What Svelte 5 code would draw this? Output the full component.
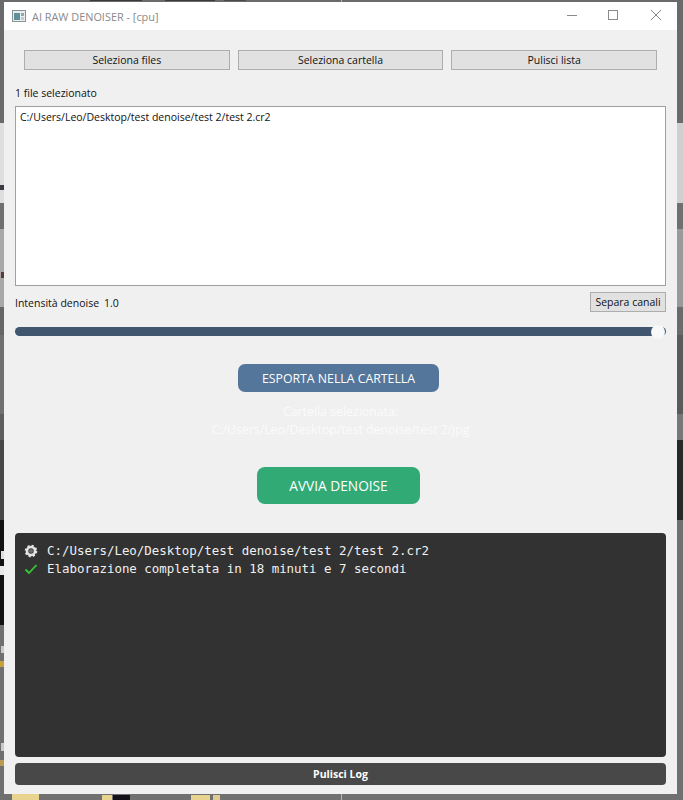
<script lang="ts">
  let files = ["C:/Users/Leo/Desktop/test denoise/test 2/test 2.cr2"];
  let topButtons = ["Seleziona files", "Seleziona cartella", "Pulisci lista"];
  let intensity = 1.0;

  // bits of the desktop that show round the window: [left, top, width, height, colour]
  let peeks = [
    [90, 0, 52, 1, "#3a3a3a"],
    [165, 0, 50, 1, "#3a3a3a"],
    [224, 0, 22, 1, "#4a4a4a"],
    [0, 185, 4, 5, "#3c3c44"],
    [1, 272, 3, 6, "#5a3c30"],
    [1, 551, 3, 8, "#dddddd"],
    [0, 566, 4, 9, "#e8e8e8"],
    [1, 646, 3, 7, "#c9c9c9"],
    [0, 661, 4, 6, "#c9a040"],
    [1, 743, 3, 8, "#c9c9c9"],
    [0, 760, 4, 6, "#b89a50"],
    [12, 794, 27, 6, "#e8d38f"],
    [102, 795, 10, 5, "#e8d38f"],
    [113, 795, 17, 5, "#14101a"],
    [191, 795, 19, 5, "#e8d38f"],
    [213, 795, 7, 5, "#e0cb90"],
  ];
</script>

<div class="desktop">
  {#each peeks as [left, top, width, height, colour]}
    <div
      class="peek"
      style="left: {left}px; top: {top}px; width: {width}px; height: {height}px; background: {colour}"
    ></div>
  {/each}

  <div class="window">
    <header class="titlebar">
      <svg class="app-icon" width="14" height="12" viewBox="0 0 14 12" aria-hidden="true">
        <rect x="0.5" y="0.5" width="13" height="11" fill="#e8eef0" stroke="#8b9296" />
        <rect x="2" y="3" width="6" height="7" fill="#5f8f97" />
        <rect x="9" y="3" width="3" height="3" fill="#9aa5aa" />
        <rect x="9" y="7" width="3" height="3" fill="#c3cacd" />
      </svg>
      <span class="title">AI RAW DENOISER - [cpu]</span>
      <div class="controls">
        <svg width="42" height="28" viewBox="0 0 42 28" aria-hidden="true">
          <path d="M18 13.5h10" stroke="#8a8a8a" fill="none" />
        </svg>
        <svg width="42" height="28" viewBox="0 0 42 28" aria-hidden="true">
          <rect x="17.5" y="8.5" width="9" height="9" stroke="#8a8a8a" fill="none" />
        </svg>
        <svg width="42" height="28" viewBox="0 0 42 28" aria-hidden="true">
          <path d="M18 8l10 10M28 8L18 18" stroke="#8a8a8a" fill="none" />
        </svg>
      </div>
    </header>

    <main class="content">
      <div class="top-buttons">
        {#each topButtons as label}
          <button class="qt-button">{label}</button>
        {/each}
      </div>

      <div class="count">{files.length} file selezionato</div>

      <div class="file-list">
        {#each files as file}
          <div>{file}</div>
        {/each}
      </div>

      <div class="intensity-row">
        <span class="intensity">Intensità denoise<span class="value">{intensity.toFixed(1)}</span></span>
        <button class="qt-button small">Separa canali</button>
      </div>

      <div class="slider">
        <div class="track"></div>
        <div class="handle"></div>
      </div>

      <button class="export">ESPORTA NELLA CARTELLA</button>

      <div class="folder">
        <div>Cartella selezionata:</div>
        <div>C:/Users/Leo/Desktop/test denoise/test 2/jpg</div>
      </div>

      <button class="start">AVVIA DENOISE</button>

      <div class="log">
        <div class="log-line">
          <svg width="14" height="14" viewBox="0 0 14 14" aria-hidden="true">
            <circle cx="7" cy="7" r="4" fill="none" stroke="#e4e4e4" stroke-width="2.6" />
            <circle cx="7" cy="7" r="5.3" fill="none" stroke="#e4e4e4" stroke-width="2" stroke-dasharray="2.1 2.06" />
            <circle cx="7" cy="7" r="2" fill="#6e6e6e" />
          </svg>
          <span>{files[0]}</span>
        </div>
        <div class="log-line">
          <svg width="14" height="14" viewBox="0 0 14 14" aria-hidden="true">
            <path d="M1.5 7.5l3.5 3.5L12.5 3" fill="none" stroke="#35c935" stroke-width="1.8" />
          </svg>
          <span>Elaborazione completata in 18 minuti e 7 secondi</span>
        </div>
      </div>

      <button class="clear-log">Pulisci Log</button>
    </main>
  </div>
</div>

<style>
  :global(body) {
    margin: 0;
  }

  .desktop {
    position: relative;
    width: 683px;
    height: 800px;
    overflow: hidden;
    box-sizing: border-box;
    padding: 2px 6px 6px 4px;
    background:
      linear-gradient(
          to bottom,
          #6a6a6a 0 123px,
          #dedede 123px 203px,
          #707070 203px 229px,
          #a8a8a8 229px 307px,
          #666666 307px 335px,
          #707070 335px 414px,
          #5e5e5e 414px 440px,
          #484848 440px 520px,
          #121212 520px 625px,
          #707070 625px 800px
        )
        left / 50% 100% no-repeat,
      linear-gradient(
          to bottom,
          #6a6a6a 0 123px,
          #cfcfcf 123px 203px,
          #707070 203px 229px,
          #9a9a9a 229px 307px,
          #6a6a6a 307px 335px,
          #5a5a5a 335px 414px,
          #777777 414px 440px,
          #282828 440px 520px,
          #707070 520px 800px
        )
        right / 50% 100% no-repeat;
    font-family: "Open Sans", "Noto Sans", sans-serif;
  }

  .peek {
    position: absolute;
  }

  .window {
    position: relative;
    display: flex;
    flex-direction: column;
    height: 100%;
    background: #f0f0f0;
  }

  .titlebar {
    flex: none;
    display: flex;
    align-items: center;
    height: 28px;
    padding-left: 8px;
    background: #ffffff;
  }

  .app-icon {
    margin-right: 6px;
  }

  .title {
    flex: 1;
    color: #8a8a8a;
    font-size: 10.9px;
  }

  .controls {
    display: flex;
    margin-right: 2px;
  }

  .content {
    flex: 1;
    display: flex;
    flex-direction: column;
    padding: 0 11px;
    color: #111111;
    font-size: 10.5px;
  }

  .qt-button {
    padding: 0;
    border: 1px solid #adadad;
    background: #e1e1e1;
    color: #111111;
    font: inherit;
  }

  .top-buttons {
    display: grid;
    grid-template-columns: repeat(3, 1fr);
    gap: 8px;
    height: 20px;
    margin: 20px 9px 0;
  }

  .count {
    margin-top: 16px;
    height: 20px;
    line-height: 14px;
  }

  .file-list {
    box-sizing: border-box;
    height: 180px;
    padding: 3px 4px;
    border: 1px solid #a0a0a0;
    background: #ffffff;
    line-height: 14px;
  }

  .intensity-row {
    display: flex;
    justify-content: space-between;
    align-items: center;
    height: 20px;
    margin-top: 6px;
  }

  .intensity {
    margin-top: 2px;
  }

  .value {
    margin-left: 5px;
  }

  .small {
    width: 76px;
    height: 20px;
  }

  .slider {
    position: relative;
    height: 9px;
    margin-top: 15px;
  }

  .track {
    height: 100%;
    border-radius: 5px;
    background: #3f566e;
  }

  .handle {
    position: absolute;
    right: 1px;
    top: -2px;
    width: 14px;
    height: 14px;
    border-radius: 50%;
    background: #f8f8f8;
  }

  .export,
  .start {
    align-self: center;
    padding: 0;
    margin-right: 4px;
    border: none;
    color: #ffffff;
    font: inherit;
  }

  .export {
    width: 201px;
    height: 28px;
    margin-top: 28px;
    border-radius: 7px;
    background: #54769b;
    font-size: 12.3px;
  }

  .folder {
    margin-top: 11px;
    color: #fbfbfb;
    font-size: 12.3px;
    line-height: 18px;
    text-align: center;
  }

  .start {
    width: 163px;
    height: 37px;
    margin-top: 28px;
    border-radius: 8px;
    background: #32aa76;
    font-size: 13.7px;
  }

  .log {
    box-sizing: border-box;
    height: 224px;
    margin-top: 29px;
    padding: 9px;
    border-radius: 4px;
    background: #323232;
    color: #f0f0f0;
    font-family: "DejaVu Sans Mono", monospace;
    font-size: 12.45px;
    line-height: 18px;
  }

  .log-line {
    display: flex;
    align-items: center;
    gap: 9px;
    height: 18px;
    white-space: pre;
  }

  .clear-log {
    height: 22px;
    margin-top: 6px;
    padding: 0;
    border: none;
    border-radius: 4px;
    background: #484848;
    color: #ffffff;
    font: inherit;
    font-weight: 700;
  }
</style>
